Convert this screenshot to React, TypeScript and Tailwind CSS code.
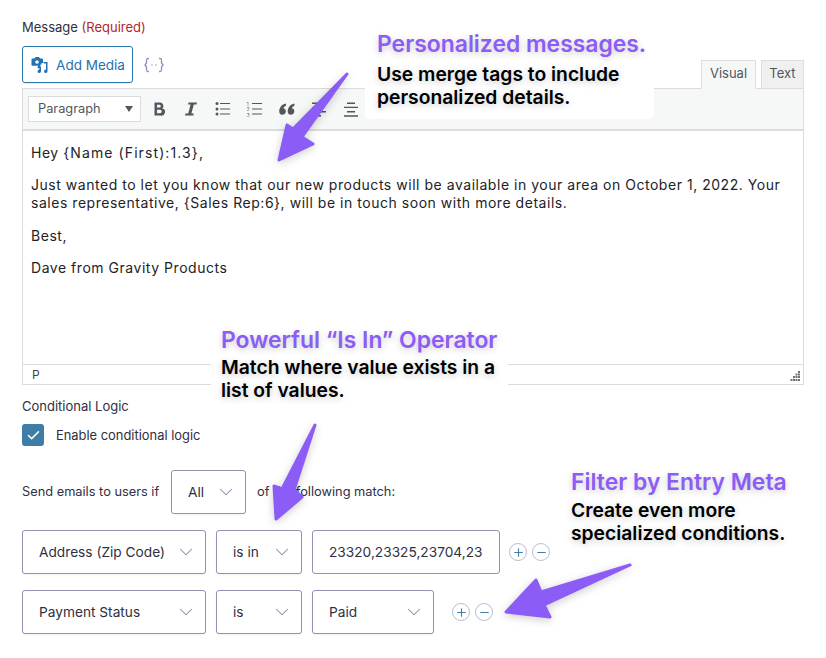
import { ChevronDown, Check, Plus, Minus } from "lucide-react"

const Arrow = ({ className, box, points }: { className: string; box: string; points: string }) => (
  <svg className={`absolute drop-shadow-[0_2px_4px_rgba(0,0,0,0.2)] ${className}`} viewBox={box}>
    <polygon points={points} fill="#8b5cf6" stroke="#8b5cf6" strokeWidth="3" strokeLinejoin="round" />
  </svg>
)

const Callout = ({ className, bodyClass, title, lines }: { className: string; bodyClass: string; title: string; lines: string[] }) => (
  <div className={`absolute font-semibold [text-shadow:0_2px_7px_rgba(0,0,0,0.22)] ${className}`}>
    <div className="text-[22.9px] leading-[30px] text-[#8b5cf6] whitespace-nowrap">{title}</div>
    <div className={`text-[19.3px] leading-[23px] text-black ${bodyClass}`}>
      {lines.map((l) => (
        <div key={l} className="whitespace-nowrap">{l}</div>
      ))}
    </div>
  </div>
)

const Select = ({ label, className }: { label: string; className: string }) => (
  <div className={`h-[44px] flex items-center justify-between pl-[16px] pr-[8px] bg-white border border-[#9092b2] rounded-[3px] text-[13.7px] text-[#2f3042] shadow-[0_1px_2px_rgba(0,0,0,0.05)] ${className}`}>
    <span className="whitespace-nowrap">{label}</span>
    <ChevronDown size={22} strokeWidth={1.1} className="text-[#8688a6]" />
  </div>
)

const RoundBtn = ({ children }: { children: React.ReactNode }) => (
  <span className="w-[18px] h-[18px] rounded-full border border-[#b9bcd8] flex items-center justify-center text-[#3e7da6] bg-white">
    {children}
  </span>
)

const PlusMinus = ({ className }: { className: string }) => (
  <div className={`flex gap-[5px] ${className}`}>
    <RoundBtn><Plus size={13} strokeWidth={2} /></RoundBtn>
    <RoundBtn><Minus size={13} strokeWidth={2} /></RoundBtn>
  </div>
)

const icon = "#50575e"

const BoldIcon = () => (
  <svg width="18" height="18" viewBox="0 0 18 18" fill={icon}>
    <path fillRule="evenodd" d="M4.500 2.500H10a3.400 3.400 0 0 1 2.300 5.900A3.600 3.600 0 0 1 10.500 15.500h-6zM7 4.800v2.800h2.400a1.400 1.400 0 0 0 0-2.800zM7 9.700v3.500h3a1.750 1.750 0 0 0 0-3.500z" />
  </svg>
)

const ItalicIcon = () => (
  <svg width="18" height="18" viewBox="0 0 18 18" fill={icon}>
    <path d="M6.500 2.500h8.500l-.5 2.100h-2.700l-2.400 8.800h2.400l-.5 2.100H3l.5-2.100h2.700l2.400-8.800H6z" />
  </svg>
)

const BulletIcon = () => (
  <svg width="18" height="18" viewBox="0 0 18 18" fill={icon}>
    <circle cx="3" cy="3.500" r="1.500" />
    <circle cx="3" cy="9" r="1.500" />
    <circle cx="3" cy="14" r="1.500" />
    <path d="M6 3h10v1H6zM6 8.500h10v1H6zM6 13.500h10v1H6z" />
  </svg>
)

const NumberIcon = () => (
  <svg width="18" height="18" viewBox="0 0 18 18" fill={icon}>
    <text x="0.800" y="5.500" fontSize="4.500" fontFamily="Inter, sans-serif">1</text>
    <text x="0.800" y="11" fontSize="4.500" fontFamily="Inter, sans-serif">2</text>
    <text x="0.800" y="16.500" fontSize="4.500" fontFamily="Inter, sans-serif">3</text>
    <path d="M6 3h10v1H6zM6 8.500h10v1H6zM6 13.500h10v1H6z" />
  </svg>
)

const QuoteIcon = () => (
  <svg width="18" height="18" viewBox="0 0 18 18" fill={icon}>
    <path d="M8 3.500v2.200C6.500 6.100 5.700 6.900 5.400 8.300A3.300 3.300 0 1 1 1.200 11.500C1.200 7.500 3.800 4.200 8 3.500z" />
    <path d="M16.500 3.500v2.200c-1.500.4-2.300 1.200-2.600 2.600a3.300 3.300 0 1 1-4.200 3.200c0-4 2.600-7.300 6.800-8z" />
  </svg>
)

const AlignLeftIcon = () => (
  <svg width="18" height="18" viewBox="0 0 18 18" fill={icon}>
    <path d="M2 2.500h14v1.400H2zM2 7h9v1.400H2zM2 11h14v1.400H2zM2 15h9v1.400H2z" />
  </svg>
)

const AlignCenterIcon = () => (
  <svg width="18" height="18" viewBox="0 0 18 18" fill={icon}>
    <path d="M5 2.500h8v1.400H5zM2 6.700h14v1.400H2zM5 11h8v1.400H5zM2 15.300h14v1.400H2z" />
  </svg>
)

const ToolBtn = ({ children }: { children: React.ReactNode }) => (
  <span className="w-[32px] flex justify-center">{children}</span>
)

export default function App() {
  return (
    <div className="relative w-[826px] h-[658px] overflow-hidden bg-white font-['Inter',sans-serif] text-[#2f3042]">
      <div className="pl-[22px] pt-[19px] w-[804px]">
        <div className="text-[13px] leading-[17px]">
          Message <span className="text-[#b3262e]">(Required)</span>
        </div>

        <div className="mt-[10px] h-[42px] flex">
          <div className="h-[37px] w-[111px] flex items-center justify-center gap-[8px] pl-[1px] border border-[#2c75ab] rounded-[3px] text-[#2271b1] text-[13.5px] shadow-[0_1px_1px_rgba(0,0,0,0.08)]">
            <svg width="17" height="17" viewBox="0 0 17 17" fill="#2271b1">
              <path d="M1.500 2.500H3.500L4.500 1h3.500l1 1.500h2a1 1 0 0 1 1 1V7h-1.500v1.500H9.500V11H7v-1.200H1.500a1 1 0 0 1-1-1v-5.300a1 1 0 0 1 1-1z" />
              <circle cx="6" cy="6" r="1.800" fill="#fff" />
              <path d="M6.500 11h3.500v4.300a1.700 1.700 0 1 1-1.500-1.700v-1.300H6.500z" />
              <path d="M12.500 6h4v9.300a1.700 1.700 0 1 1-1.500-1.700V7.500h-2.500z" />
            </svg>
            <span className="pt-[2px]">Add Media</span>
          </div>
          <svg className="ml-[11px] mt-[11px]" width="20" height="16" viewBox="0 0 20 16" fill="none" stroke="#8f91b8" strokeWidth="1.300">
            <path d="M5 1.500H4a1.500 1.500 0 0 0-1.500 1.500v3L1 8l1.500 2v3A1.500 1.500 0 0 0 4 14.500h1" />
            <path d="M15 1.500h1A1.500 1.500 0 0 1 17.500 3v3L19 8l-1.500 2v3a1.500 1.500 0 0 1-1.500 1.500h-1" />
            <path d="M7.500 8h1M11.500 8h1" strokeWidth="1.500" />
          </svg>
          <div className="ml-auto flex items-end text-[13px] text-[#50575e]">
            <div className="relative top-px w-[55px] h-[29px] pb-[2px] flex items-center justify-center border border-[#dcdcde] border-b-[#f6f7f7] bg-[#f6f7f7]">Visual</div>
            <div className="relative top-px ml-[5px] w-[43px] h-[29px] pb-[2px] flex items-center justify-center border border-[#dcdcde] bg-[#f0f0f1]">Text</div>
          </div>
        </div>

        <div className="border border-[#dcdcde]">
          <div className="h-[42px] flex items-center bg-[#f6f7f7] border-b-2 border-[#dcdcde] pl-[5px]">
            <div className="w-[113px] h-[26px] flex items-center justify-between pl-[9px] pr-[5px] border border-[#dcdcde] bg-white text-[12.8px] text-[#50575e]">
              <span>Paragraph</span>
              <span className="w-0 h-0 border-x-[4px] border-x-transparent border-t-[6px] border-t-[#50575e] mr-[2px]" />
            </div>
            <div className="ml-[2px] flex">
              <ToolBtn><BoldIcon /></ToolBtn>
              <ToolBtn><ItalicIcon /></ToolBtn>
              <ToolBtn><BulletIcon /></ToolBtn>
              <ToolBtn><NumberIcon /></ToolBtn>
              <ToolBtn><QuoteIcon /></ToolBtn>
              <ToolBtn><AlignLeftIcon /></ToolBtn>
              <ToolBtn><AlignCenterIcon /></ToolBtn>
            </div>
          </div>

          <div className="h-[233px] px-[8px] pt-[13px] text-[14px] leading-[18px] tracking-[0.53px] text-[#1d2327]">
            <p>Hey <span className="tracking-[1.1px]">{"{Name (First):1.3}"}</span>,</p>
            <p className="mt-[14px]">
              Just wanted to let you know that our new products will be available in your area on October 1, 2022. Your
              <br />
              sales representative, {"{Sales Rep:6}"}, will be in touch soon with more details.
            </p>
            <p className="mt-[15px]">Best,</p>
            <p className="mt-[14px]">Dave from Gravity Products</p>
          </div>

          <div className="relative h-[20px] border-t border-[#dcdcde] pl-[9px] text-[12px] leading-[19px] text-[#3c434a]">
            P
            <svg className="absolute right-[3px] bottom-[3px]" width="10" height="10" viewBox="0 0 10 10" fill="#6f7378">
              <path d="M8 0h2v2H8zM8 2.500h2v2H8zM5.500 2.500h2v2h-2zM8 5h2v2H8zM5.500 5h2v2h-2zM3 5h2v2H3zM8 8h2v2H8zM5.500 8h2v2h-2zM3 8h2v2H3zM.500 8h2v2h-2z" />
            </svg>
          </div>
        </div>

        <div className="mt-[13px] text-[13px] leading-[17px]">Conditional Logic</div>

        <div className="mt-[9px] flex items-center gap-[12px] text-[12.9px]">
          <span className="w-[22px] h-[22px] rounded-[3px] bg-[#3e7da6] flex items-center justify-center">
            <Check size={15} strokeWidth={2.5} className="text-white" />
          </span>
          <span className="pt-[1px]">Enable conditional logic</span>
        </div>

        <div className="mt-[24px] flex items-center text-[12.8px]">
          <span className="w-[149px] pb-[1px]">Send emails to users if</span>
          <Select label="All" className="w-[75px]" />
          <span className="ml-[11px] pb-[1px]">of the following match:</span>
        </div>

        <div className="mt-[16px] flex">
          <Select label="Address (Zip Code)" className="w-[184px]" />
          <Select label="is in" className="ml-[10px] w-[86px]" />
          <div className="ml-[10px] w-[188px] h-[44px] flex items-center pl-[16px] border border-[#9092b2] rounded-[3px] text-[13.7px] whitespace-nowrap overflow-hidden">
            23320,23325,23704,23
          </div>
          <PlusMinus className="ml-[9px] mt-[13px]" />
        </div>

        <div className="mt-[16px] flex">
          <Select label="Payment Status" className="w-[184px]" />
          <Select label="is" className="ml-[10px] w-[86px]" />
          <Select label="Paid" className="ml-[10px] w-[122px]" />
          <PlusMinus className="ml-[18px] mt-[13px]" />
        </div>
      </div>

      <div className="absolute left-[365px] top-[86px] w-[289px] h-[33px] bg-white rounded-b-[5px]" />
      <div className="absolute left-[211px] top-[360px] w-[297px] h-[26px] bg-white" />

      <Callout className="left-[377px] top-[29px]" bodyClass="mt-[4px]" title="Personalized messages." lines={["Use merge tags to include", "personalized details."]} />
      <Callout className="left-[221px] top-[325px]" bodyClass="mt-[1px]" title="Powerful “Is In” Operator" lines={["Match where value exists in a", "list of values."]} />
      <Callout className="left-[571px] top-[467px]" bodyClass="mt-[2px]" title="Filter by Entry Meta" lines={["Create even more", "specialized conditions."]} />

      <Arrow className="left-[270px] top-[65px] w-[90px] h-[105px]" box="270 65 90 105" points="347,74 302,137 313,144 279,160 287,125 293,129" />
      <Arrow className="left-[265px] top-[415px] w-[60px] h-[115px]" box="265 415 60 115" points="315,425 294,490 302,497 276,519 274,486 282,489" />
      <Arrow className="left-[495px] top-[555px] w-[145px] h-[70px]" box="495 555 145 70" points="630,565 541,592 536,580 506,612 550,617 544,605" />
    </div>
  )
}
